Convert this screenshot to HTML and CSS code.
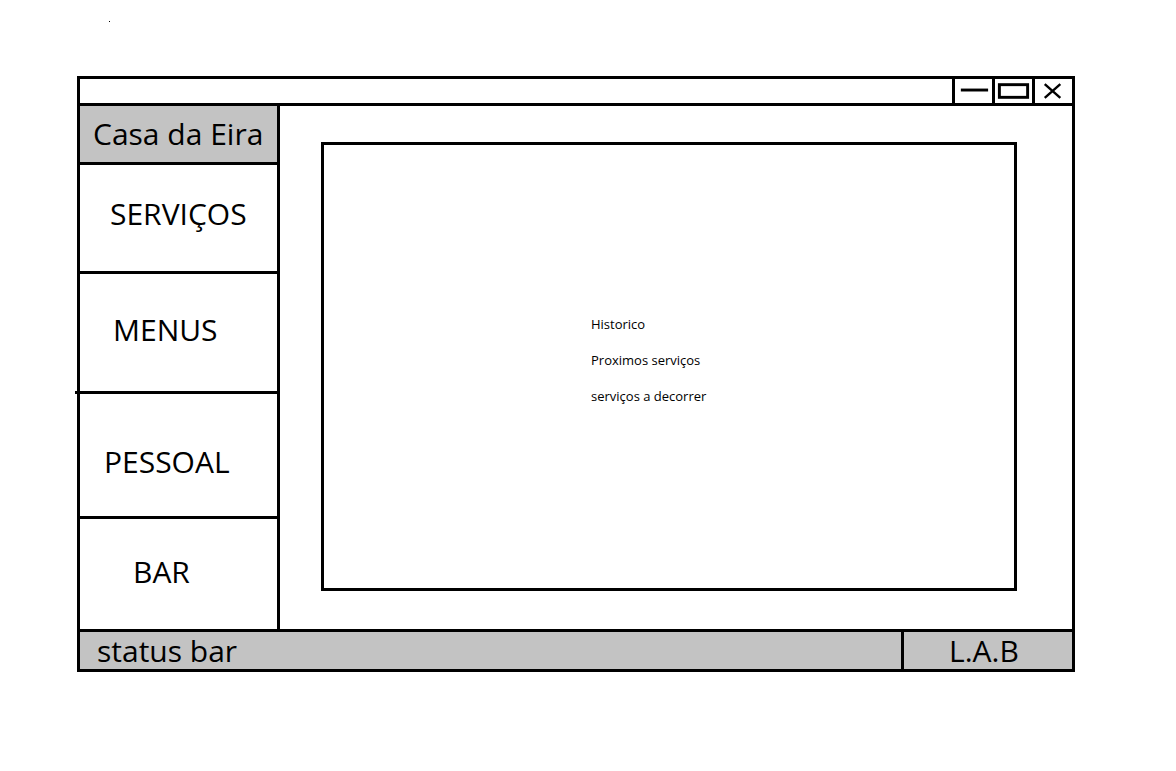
FILE: index.html
```html
<!DOCTYPE html>
<html lang="pt">
<head>
    <meta charset="UTF-8">
    <title>Casa da Eira</title>
    <link rel="stylesheet" href="styles.css">
</head>
<body>
    <span class="speck"></span>
    <div class="window">
        <div class="titlebar">
            <div class="win-btn">
                <svg width="38" height="24" viewBox="0 0 38 24"><line x1="6" y1="11" x2="34" y2="11" stroke="#000" stroke-width="3"/></svg>
            </div>
            <div class="win-btn">
                <svg width="38" height="24" viewBox="0 0 38 24"><rect x="4.5" y="5.5" width="29" height="13" fill="none" stroke="#000" stroke-width="3"/></svg>
            </div>
            <div class="win-btn">
                <svg width="38" height="24" viewBox="0 0 38 24"><path d="M10 5 L26 19 M26 5 L10 19" stroke="#000" stroke-width="2.5"/></svg>
            </div>
        </div>

        <div class="main">
            <nav class="sidebar">
                <div class="brand">Casa da Eira</div>
                <div class="nav-item nav-servicos">SERVIÇOS</div>
                <div class="nav-item nav-menus">MENUS</div>
                <div class="nav-item nav-pessoal">PESSOAL</div>
                <div class="nav-item nav-bar">BAR</div>
            </nav>

            <section class="content">
                <div class="panel">
                    <ul class="panel-list">
                        <li>Historico</li>
                        <li>Proximos serviços</li>
                        <li>serviços a decorrer</li>
                    </ul>
                </div>
            </section>
        </div>

        <div class="statusbar">
            <div class="status-text">status bar</div>
            <div class="status-author">L.A.B</div>
        </div>
    </div>
</body>
</html>
```

FILE: styles.css
```css
/* Base */
body {
    margin: 0;
    background: #fff;
    font-family: 'Open Sans', 'DejaVu Sans', sans-serif;
    color: #000;
    position: relative;
}

.speck {
    position: absolute;
    left: 109px;
    top: 21px;
    width: 1px;
    height: 1px;
    background: #000;
}

/* Window frame */
.window {
    margin: 76px 0 0 77px;
    width: 992px;
    border: 3px solid #000;
    display: flex;
    flex-direction: column;
}

.titlebar {
    height: 24px;
    border-bottom: 3px solid #000;
    display: flex;
    justify-content: flex-end;
}

.win-btn {
    width: 37px;
    border-left: 3px solid #000;
    display: flex;
    align-items: center;
    justify-content: center;
}

.win-btn svg {
    display: block;
}

/* Main area */
.main {
    display: flex;
    height: 523px;
}

.sidebar {
    width: 197px;
    border-right: 3px solid #000;
    display: flex;
    flex-direction: column;
}

.brand {
    height: 56px;
    background: #c3c3c3;
    border-bottom: 3px solid #000;
    font-size: 30px;
    line-height: 56px;
    padding-left: 13px;
    white-space: nowrap;
}

.nav-item {
    display: flex;
    align-items: center;
    font-size: 30px;
    border-bottom: 3px solid #000;
    box-sizing: border-box;
    position: relative;
}

.nav-servicos {
    height: 109px;
    padding: 0 0 10px 30px;
}

.nav-menus {
    height: 120px;
    padding: 0 0 7px 33px;
}

/* little overshoot of the line on the left */
.nav-menus::after {
    content: "";
    position: absolute;
    left: -5px;
    bottom: -3px;
    width: 5px;
    height: 3px;
    background: #000;
}

.nav-pessoal {
    height: 125px;
    padding: 12px 0 0 24px;
}

.nav-bar {
    flex: 1;
    border-bottom: none;
    padding: 0 0 5px 53px;
}

/* Content */
.content {
    flex: 1;
    padding: 36px 55px 38px 41px;
}

.panel {
    height: 443px;
    border: 3px solid #000;
}

.panel-list {
    list-style: none;
    margin: 0;
    padding: 168px 0 0 267px;
    font-size: 13px;
}

.panel-list li {
    height: 36px;
    line-height: 22px;
}

/* Status bar */
.statusbar {
    height: 37px;
    border-top: 3px solid #000;
    background: #c3c3c3;
    display: flex;
    font-size: 30px;
    line-height: 37px;
}

.status-text {
    flex: 1;
    padding-left: 17px;
}

.status-author {
    width: 123px;
    border-left: 3px solid #000;
    padding-left: 45px;
}
```
